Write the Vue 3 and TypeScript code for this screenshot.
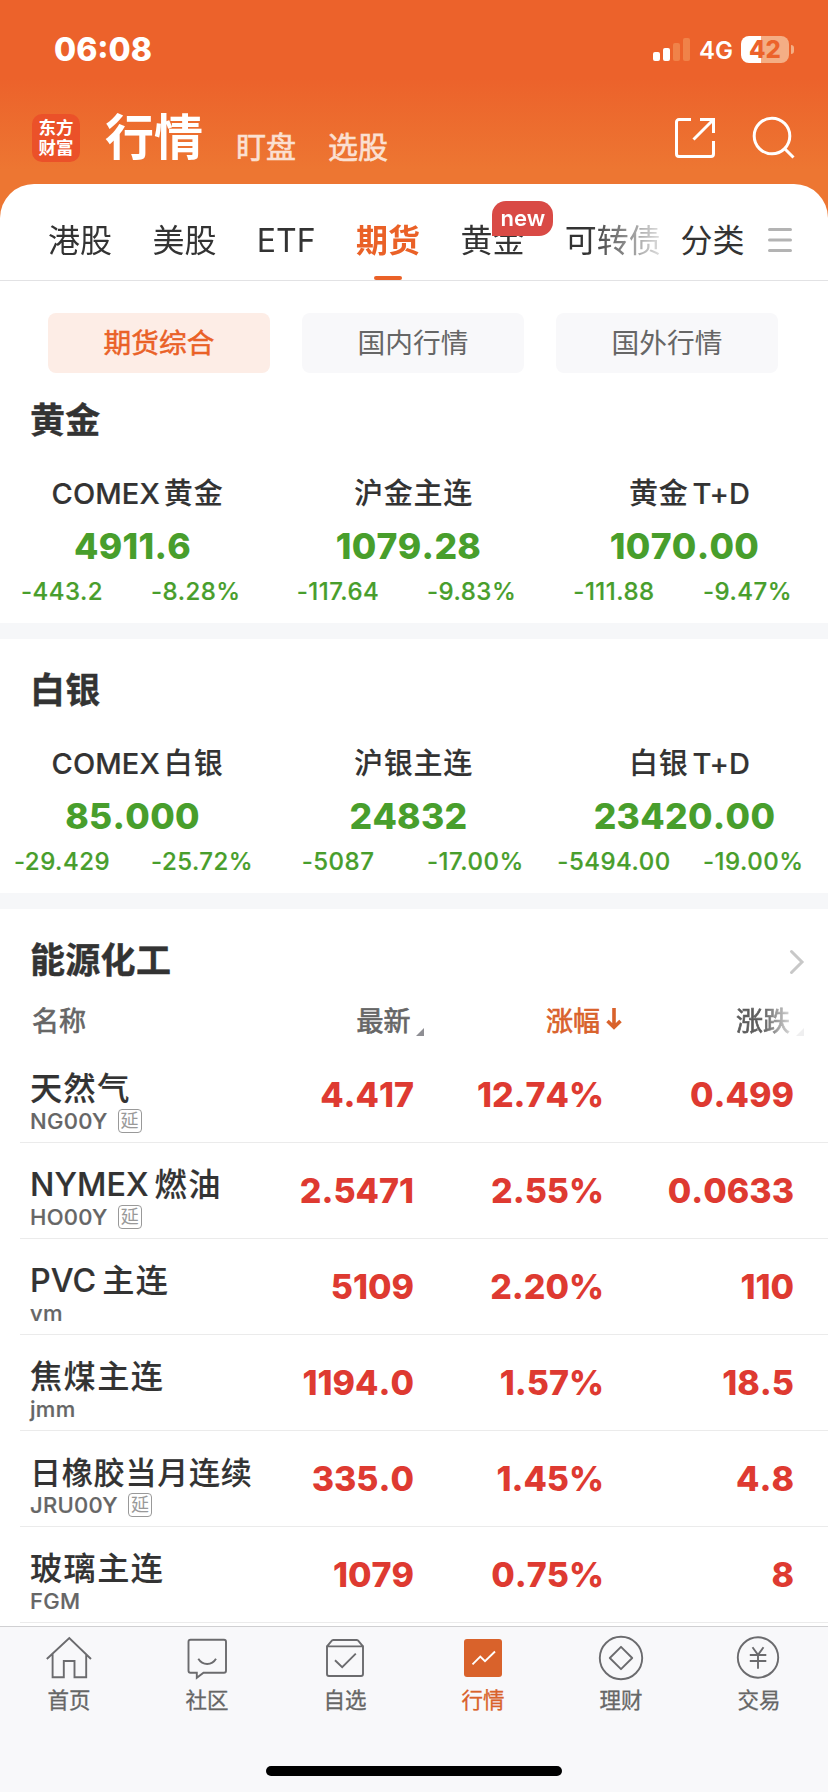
<script setup lang="ts">
interface Quote {
  name: string[]
  price: string
  change: string
  percent: string
}
interface Row {
  name: string[]
  code: string
  delayed?: boolean
  last: string
  percent: string
  change: string
}

const tabs = [
  { label: '港股' },
  { label: '美股' },
  { label: 'ETF' },
  { label: '期货', active: true },
  { label: '黄金', badge: 'new' },
  { label: '可转债' },
]

const filters = ['期货综合', '国内行情', '国外行情']

const groups: { title: string; quotes: Quote[] }[] = [
  {
    title: '黄金',
    quotes: [
      { name: ['COMEX', '黄金'], price: '4911.6', change: '-443.2', percent: '-8.28%' },
      { name: ['沪金主连'], price: '1079.28', change: '-117.64', percent: '-9.83%' },
      { name: ['黄金', 'T+D'], price: '1070.00', change: '-111.88', percent: '-9.47%' },
    ],
  },
  {
    title: '白银',
    quotes: [
      { name: ['COMEX', '白银'], price: '85.000', change: '-29.429', percent: '-25.72%' },
      { name: ['沪银主连'], price: '24832', change: '-5087', percent: '-17.00%' },
      { name: ['白银', 'T+D'], price: '23420.00', change: '-5494.00', percent: '-19.00%' },
    ],
  },
]

const rows: Row[] = [
  { name: ['天然气'], code: 'NG00Y', delayed: true, last: '4.417', percent: '12.74%', change: '0.499' },
  { name: ['NYMEX', '燃油'], code: 'HO00Y', delayed: true, last: '2.5471', percent: '2.55%', change: '0.0633' },
  { name: ['PVC', '主连'], code: 'vm', last: '5109', percent: '2.20%', change: '110' },
  { name: ['焦煤主连'], code: 'jmm', last: '1194.0', percent: '1.57%', change: '18.5' },
  { name: ['日橡胶当月连续'], code: 'JRU00Y', delayed: true, last: '335.0', percent: '1.45%', change: '4.8' },
  { name: ['玻璃主连'], code: 'FGM', last: '1079', percent: '0.75%', change: '8' },
]

const isLatin = (part: string) => /^[A-Z+]+$/.test(part)
// Names whose first part alone exceeds six characters are set slightly smaller.
const isLong = (name: string[]) => name[0].length > 6
</script>

<template>
  <div class="app">
    <div class="status">
      <span class="time">06:08</span>
      <svg class="signal" width="37" height="23" viewBox="0 0 37 23">
        <rect x="0" y="14" width="7" height="9" rx="2" fill="#fff" />
        <rect x="10" y="10" width="7" height="13" rx="2" fill="#fff" />
        <rect x="20" y="5" width="7" height="18" rx="2" fill="#f08249" />
        <rect x="30" y="0" width="7" height="23" rx="2" fill="#f08249" />
      </svg>
      <span class="net">4G</span>
      <span class="battery">42</span>
      <span class="nub"></span>
    </div>

    <header class="head">
      <div class="logo"><span>东方</span><span>财富</span></div>
      <h1>行情</h1>
      <span class="sub">盯盘</span>
      <span class="sub">选股</span>
      <svg class="share" width="42" height="42" viewBox="0 0 42 42" fill="none" stroke="#fff" stroke-width="3">
        <path d="M17 2.5H5a2.5 2.5 0 0 0-2.500 2.500V37a2.500 2.500 0 0 0 2.500 2.500H37a2.500 2.500 0 0 0 2.500-2.500V24" />
        <path d="M26 2.500H39.500V16M39 3L19.500 22.500" />
      </svg>
      <svg class="search" width="44" height="44" viewBox="0 0 44 44" fill="none" stroke="#fff" stroke-width="3">
        <circle cx="20" cy="20" r="17.800" />
        <path d="M32.500 32.500L41.500 41.500" />
      </svg>
    </header>

    <main class="sheet">
      <nav class="tabs">
        <div class="scroller">
          <div v-for="t in tabs" :key="t.label" class="tab" :class="{ active: t.active }">
            {{ t.label }}<span v-if="t.badge" class="badge">{{ t.badge }}</span>
          </div>
        </div>
        <div class="tab category">分类</div>
        <svg class="menu" width="24" height="24" viewBox="0 0 24 24" stroke="#b3b3b3" stroke-width="3" stroke-linecap="round">
          <path d="M1.500 1.500H22.500M1.500 12H22.500M1.500 22.500H22.500" />
        </svg>
      </nav>

      <div class="filters">
        <div v-for="(f, i) in filters" :key="f" class="pill" :class="{ on: i === 0 }">{{ f }}</div>
      </div>

      <section v-for="g in groups" :key="g.title" class="group">
        <h2>{{ g.title }}</h2>
        <div class="quotes">
          <div v-for="q in g.quotes" :key="q.percent" class="quote">
            <div class="qname">
              <span v-for="p in q.name" :key="p" :class="{ latin: isLatin(p) }">{{ p }}</span>
            </div>
            <div class="price">{{ q.price }}</div>
            <div class="delta">
              <span class="chg">{{ q.change }}</span><span class="pct">{{ q.percent }}</span>
            </div>
          </div>
        </div>
      </section>

      <section class="energy">
        <div class="title-row">
          <h2>能源化工</h2>
          <svg width="16" height="26" viewBox="0 0 16 26" fill="none" stroke="#c8c8c8" stroke-width="3" stroke-linecap="round">
            <path d="M2.500 2.500L13 13L2.500 23.500" />
          </svg>
        </div>
        <div class="thead">
          <span class="c-name">名称</span>
          <span class="c-last">最新</span>
          <svg class="tri" width="8" height="8" viewBox="0 0 8 8"><path d="M8 0V8H0Z" fill="#8e8e93" /></svg>
          <span class="c-pct">涨幅</span>
          <svg class="arrow" width="16" height="22" viewBox="0 0 16 22" fill="none" stroke="#d9622b" stroke-width="3.600">
            <path d="M8 0V19M1.500 13L8 19.200L14.500 13" />
          </svg>
          <span class="c-chg">涨跌</span>
          <svg class="tri" width="8" height="8" viewBox="0 0 8 8"><path d="M8 0V8H0Z" fill="#efeff0" /></svg>
        </div>
        <div v-for="r in rows" :key="r.code" class="row">
          <div class="ident">
            <div class="rname" :class="{ long: isLong(r.name) }">
              <span v-for="p in r.name" :key="p" :class="{ latin: isLatin(p) }">{{ p }}</span>
            </div>
            <div class="code">{{ r.code }}<span v-if="r.delayed" class="delay">延</span></div>
          </div>
          <div class="num last">{{ r.last }}</div>
          <div class="num rate">{{ r.percent }}</div>
          <div class="num diff">{{ r.change }}</div>
        </div>
      </section>
    </main>

    <footer class="tabbar">
      <div class="item">
        <svg width="48" height="48" viewBox="0 0 48 48">
          <path d="M1.800 25L24.300 4L46 25M7.600 20V43.200H18.800V27H29.500V43.200H41.200V20" />
        </svg>
        <span>首页</span>
      </div>
      <div class="item">
        <svg width="48" height="48" viewBox="0 0 48 48">
          <path d="M20.500 38.800H41Q43 38.800 43 36.800V7.800Q43 5.800 41 5.800H7.500Q5.500 5.800 5.500 7.800V36.800Q5.500 38.800 7.500 38.800H13.800V43.800Z" />
          <path d="M15.300 24.800Q18.500 30 24.200 30T33 24.800" />
        </svg>
        <span>社区</span>
      </div>
      <div class="item">
        <svg width="48" height="48" viewBox="0 0 48 48">
          <path d="M6 12.400H42V40Q42 42 40 42H8Q6 42 6 40ZM6 12.400L11 6.400Q11.500 6 12.500 6H35.500Q36.500 6 37 6.400L42 12.400" />
          <path d="M14 26.200L21.200 33.200L34.800 19.600" />
        </svg>
        <span>自选</span>
      </div>
      <div class="item current">
        <svg width="48" height="48" viewBox="0 0 48 48">
          <rect x="5" y="5" width="38" height="38" rx="3" class="solid" />
          <path d="M13.500 30.300L21.300 22.500L26 27.200L36 17.500" class="trend" />
        </svg>
        <span>行情</span>
      </div>
      <div class="item">
        <svg width="48" height="48" viewBox="0 0 48 48">
          <circle cx="24" cy="24" r="21.200" />
          <path d="M24 12.800L35.200 24L24 35.200L12.800 24Z" stroke-linejoin="round" />
        </svg>
        <span>理财</span>
      </div>
      <div class="item">
        <svg width="48" height="48" viewBox="0 0 48 48">
          <circle cx="23" cy="23.500" r="20.200" />
          <path d="M17.500 13.300L23 20.800L28.500 13.300M14.800 21H31.300M14.800 27H31.300M23 20.800V34.800" />
        </svg>
        <span>交易</span>
      </div>
      <div class="home-indicator"></div>
    </footer>
  </div>
</template>

<style>
body {
  margin: 0;
}
</style>

<style scoped>
.app {
  width: 828px;
  height: 1792px;
  overflow: hidden;
  display: flex;
  flex-direction: column;
  font-family: Inter, "Noto Sans CJK SC", sans-serif;
  color: #333;
  background: linear-gradient(#ec622b 0, #ec622b 78px, #ed7632 170px, #ed7632 240px, #fff 240px);
  white-space: nowrap;
}
h1,
h2 {
  margin: 0;
}
.status {
  flex: none;
  height: 100px;
  box-sizing: border-box;
  padding: 30px 34px 0 54px;
  display: flex;
  color: #fff;
}
.time {
  font-size: 32px;
  font-weight: 800;
  line-height: 40px;
}
.signal {
  margin: 8px 9px 0 auto;
}
.net {
  width: 42px;
  font-size: 24px;
  font-weight: 600;
  line-height: 41px;
}
.battery {
  width: 48px;
  height: 27px;
  margin-top: 6px;
  border-radius: 8px;
  background: linear-gradient(90deg, #fff 20px, #f4ae85 20px);
  color: #ec622b;
  font-size: 24px;
  font-weight: 800;
  line-height: 27px;
  text-align: center;
}
.nub {
  width: 3px;
  height: 9px;
  margin: 15px 0 0 2px;
  border-radius: 0 4px 4px 0;
  background: #f4ae85;
}
.head {
  flex: none;
  height: 84px;
  box-sizing: border-box;
  padding-left: 32px;
  display: flex;
  align-items: flex-start;
  color: #fff;
}
.logo {
  width: 48px;
  height: 48px;
  margin-top: 14px;
  box-sizing: border-box;
  padding-top: 4px;
  border-radius: 10px;
  background: #eb5129;
  display: flex;
  flex-direction: column;
  align-items: center;
  font-size: 17.500px;
  font-weight: 700;
  line-height: 20px;
}
h1 {
  margin-left: 25px;
  width: 100px;
  font-size: 49px;
  font-weight: 700;
  line-height: 76px;
}
.sub {
  margin: 27px 0 0 31px;
  width: 60px;
  font-size: 30px;
  line-height: 40px;
  color: #fbe0d2;
  -webkit-text-stroke: 0.6px #fbe0d2;
}
.sub + .sub {
  margin-left: 32px;
}
.share {
  margin: 17px 0 0 286px;
}
.search {
  margin: 16px 0 0 36px;
}
.sheet {
  flex: none;
  height: 1442px;
  background: #fff;
  border-radius: 34px 34px 0 0;
  overflow: hidden;
}
.tabs {
  height: 97px;
  box-sizing: border-box;
  border-bottom: 1px solid #e2e2e4;
  display: flex;
}
.scroller {
  width: 668px;
  box-sizing: border-box;
  padding-left: 48px;
  display: flex;
  gap: 40.400px;
  overflow: hidden;
  -webkit-mask-image: linear-gradient(90deg, #000 588px, transparent 674px);
  mask-image: linear-gradient(90deg, #000 588px, transparent 674px);
}
.tab {
  position: relative;
  flex: none;
  height: 96px;
  padding-top: 1px;
  box-sizing: border-box;
  font-size: 32px;
  line-height: 112px;
}
.tab.active {
  color: #ea6127;
  font-weight: 700;
}
.tab.active::after {
  content: "";
  position: absolute;
  left: 18px;
  bottom: 0;
  width: 28px;
  height: 4px;
  border-radius: 2px;
  background: #ea6127;
}
.badge {
  position: absolute;
  left: 32px;
  top: 17px;
  width: 61px;
  height: 35px;
  border-radius: 14px 14px 14px 0;
  background: #d94a45;
  color: #fff;
  font-size: 22px;
  font-weight: 600;
  line-height: 34px;
  text-align: center;
}
.category {
  margin-left: 12.500px;
}
.menu {
  margin: 44px 0 0 23.500px;
}
.filters {
  display: flex;
  gap: 32px;
  padding: 32px 48px 0;
  height: 56px;
}
.pill {
  width: 222px;
  height: 60px;
  border-radius: 8px;
  background: #f8f8fa;
  color: #666;
  font-size: 27.700px;
  line-height: 61px;
  text-align: center;
}
.pill.on {
  background: #fdede6;
  color: #ea6127;
  -webkit-text-stroke: 0.5px #ea6127;
}
.group {
  height: 270px;
  box-sizing: border-box;
  border-bottom: 16px solid #f6f7f9;
  padding-top: 31px;
}
h2 {
  padding-left: 30px;
  font-size: 35px;
  font-weight: 700;
  line-height: 40px;
  letter-spacing: 0.300px;
  -webkit-text-stroke: 0.4px #333;
}
.quotes {
  display: grid;
  grid-template-columns: repeat(3, 276px);
  margin-top: 34px;
}
.qname {
  padding-right: 1px;
  display: flex;
  justify-content: center;
  gap: 4px;
  font-size: 29px;
  font-weight: 500;
  line-height: 40px;
  letter-spacing: 0.800px;
  -webkit-text-stroke: 0.1px #333;
}
.qname .latin,
.rname .latin {
  letter-spacing: 0.100px;
  -webkit-text-stroke: 0.2px #333;
}
.price {
  margin-top: 13px;
  padding-right: 11px;
  text-align: center;
  font-size: 35.500px;
  font-weight: 800;
  line-height: 40px;
  letter-spacing: 0.300px;
  font-kerning: none;
  color: #489e2c;
}
.delta {
  display: flex;
  margin-top: 5px;
  font-size: 24px;
  font-weight: 500;
  line-height: 40px;
  letter-spacing: 0.500px;
  color: #489e2c;
  -webkit-text-stroke: 0.2px #489e2c;
}
.chg {
  width: 124px;
  display: flex;
  justify-content: center;
}
.pct {
  margin-left: 27px;
}
.energy {
  padding-top: 31px;
}
.title-row {
  display: flex;
  justify-content: space-between;
  padding-right: 23px;
}
.title-row svg {
  margin-top: 9px;
}
.thead {
  display: flex;
  height: 67px;
  padding: 22px 0 0 32px;
  box-sizing: border-box;
  font-size: 27px;
  line-height: 39px;
  color: #666;
  -webkit-text-stroke: 0.7px #666;
}
.c-name {
  width: 324.500px;
}
.c-last {
  width: 59.500px;
}
.tri {
  margin-top: 26px;
}
.c-pct {
  margin-left: 122px;
  width: 60px;
  color: #d9622b;
  -webkit-text-stroke-color: #d9622b;
}
.arrow {
  margin-top: 6px;
}
.c-chg {
  margin-left: 114px;
  width: 60px;
  color: transparent;
  -webkit-text-stroke-color: transparent;
  background: linear-gradient(90deg, #5c5c5c 26px, #ddd 56px);
  -webkit-background-clip: text;
  background-clip: text;
}
.row {
  height: 96px;
  box-sizing: border-box;
  margin-left: 20px;
  padding-left: 10px;
  border-bottom: 1px solid #ebebeb;
  display: flex;
}
.ident {
  width: 223px;
  padding-top: 22px;
}
.rname {
  display: flex;
  gap: 6px;
  height: 40px;
  font-size: 32.200px;
  font-weight: 500;
  line-height: 40px;
  letter-spacing: 1.400px;
  -webkit-text-stroke: 0.15px #333;
}
.rname.long {
  font-size: 31px;
  letter-spacing: 0.800px;
}
.code {
  height: 24px;
  display: flex;
  align-items: center;
  font-size: 22px;
  font-weight: 500;
  line-height: 24px;
  letter-spacing: 0.300px;
  color: #666;
  -webkit-text-stroke: 0.2px #666;
}
.delay {
  margin-left: 10px;
  width: 24px;
  height: 24px;
  box-sizing: border-box;
  border: 1px solid #999;
  border-radius: 4px;
  font-size: 18px;
  font-weight: 400;
  line-height: 22px;
  letter-spacing: 0;
  text-align: center;
  color: #999;
  -webkit-text-stroke: 0;
}
.num {
  padding-top: 1px;
  text-align: right;
  font-size: 34px;
  font-weight: 800;
  line-height: 94px;
  font-kerning: none;
  color: #de3a31;
}
.last {
  width: 161px;
}
.rate {
  width: 190px;
}
.diff {
  width: 190px;
}
.tabbar {
  flex: none;
  height: 166px;
  box-sizing: border-box;
  border-top: 1px solid #d0d0d2;
  background: #f8f8fa;
  display: grid;
  grid-template-columns: repeat(6, 138px);
  grid-template-rows: 139px 10px;
}
.item {
  padding-top: 7px;
  display: flex;
  flex-direction: column;
  align-items: center;
  color: #666;
  font-size: 21.500px;
  line-height: 30px;
  -webkit-text-stroke: 0.3px currentColor;
}
.item svg {
  fill: none;
  stroke: #6b6b6e;
  stroke-width: 1.900;
}
.item span {
  margin-top: 3px;
}
.item.current {
  color: #d9622b;
}
.item .solid {
  fill: #d9622b;
  stroke: none;
}
.item .trend {
  stroke: #fff;
}
.home-indicator {
  grid-column: 1 / -1;
  justify-self: center;
  width: 296px;
  height: 10px;
  border-radius: 5px;
  background: #000;
}
</style>
